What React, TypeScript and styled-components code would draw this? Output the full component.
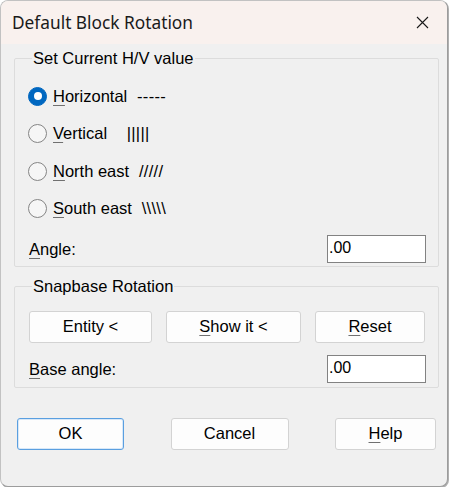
import React from "react";
import styled, { createGlobalStyle } from "styled-components";

const GlobalStyle = createGlobalStyle`
  html, body {
    margin: 0;
    padding: 0;
    background: #ffffff;
  }
  body {
    font-family: "Liberation Sans", Arial, sans-serif;
    color: #000;
  }
`;

const Window = styled.div`
  width: 448px;
  height: 487px;
  box-sizing: border-box;
  border: 1px solid #c2c2c2;
  border-right-color: #9c9c9c;
  border-bottom-color: #9c9c9c;
  box-shadow: 1px 1px 0 #b0b0b0;
  border-radius: 8px;
  overflow: hidden;
  background: #f0f0f0;
  display: flex;
  flex-direction: column;
`;

const TitleBar = styled.div`
  height: 43px;
  flex: none;
  background: #f9f1ee;
  display: flex;
  align-items: center;
  justify-content: space-between;
  padding-left: 11px;
`;

const Title = styled.div`
  font-family: "Noto Sans", "Open Sans", sans-serif;
  font-size: 17.3px;
  color: #1a1a1a;
  padding-bottom: 1px;
`;

const CloseBox = styled.div`
  width: 49px;
  height: 43px;
  display: flex;
  align-items: center;
  justify-content: center;
`;

const Body = styled.div`
  padding: 4.5px 8px 0 13px;
  display: flex;
  flex-direction: column;
`;

const Group = styled.fieldset<{ $gap?: number; $pt: number; $pb: number }>`
  margin: ${({ $gap }) => $gap ?? 0}px 0 0 0;
  padding: ${({ $pt }) => $pt}px 12px ${({ $pb }) => $pb}px 13px;
  border: 1px solid #dcdcdc;
  border-radius: 2px;
  min-width: 0;
`;

const Legend = styled.legend`
  font-size: 16.5px;
  padding: 0 1px;
  margin-left: 4px;
  line-height: 19px;
`;

const RadioRow = styled.label`
  height: 37.5px;
  display: flex;
  align-items: center;
  font-size: 16.5px;
  white-space: pre;
`;

const RadioDot = styled.span<{ $checked?: boolean }>`
  width: 19px;
  height: 19px;
  box-sizing: border-box;
  border-radius: 50%;
  flex: none;
  margin-right: 6px;
  display: flex;
  align-items: center;
  justify-content: center;
  background: ${({ $checked }) => ($checked ? "#0067c0" : "#f6f6f6")};
  border: 1px solid ${({ $checked }) => ($checked ? "#0067c0" : "#858585")};
  &::after {
    content: "";
    display: ${({ $checked }) => ($checked ? "block" : "none")};
    width: 8px;
    height: 8px;
    border-radius: 50%;
    background: #ffffff;
  }
`;

const Glyphs = styled.span`
  letter-spacing: 0.3px;
`;

const FieldRow = styled.div<{ $gap: number }>`
  margin-top: ${({ $gap }) => $gap}px;
  height: 28px;
  display: flex;
  align-items: center;
  justify-content: space-between;
  padding-left: 1px;
`;

const FieldLabel = styled.span`
  font-size: 16.5px;
  padding-top: 1px;
`;

const NumberInput = styled.input`
  width: 99px;
  height: 28px;
  box-sizing: border-box;
  border: 1px solid #828282;
  background: #ffffff;
  font-family: "Liberation Sans", Arial, sans-serif;
  font-size: 16px;
  padding: 0 0 2px 1px;
  margin: 0;
  outline: none;
  color: #000;
`;

const ButtonRow = styled.div`
  display: flex;
  gap: 14px;
  padding-left: 1px;
`;

const Button = styled.button<{ $w: number; $default?: boolean }>`
  width: ${({ $w }) => $w}px;
  height: 32px;
  box-sizing: border-box;
  margin: 0;
  padding: 0 0 1px 0;
  background: #fdfdfd;
  border: 1px solid ${({ $default }) => ($default ? "#5a9fe0" : "#d3d3d3")};
  box-shadow: ${({ $default }) => ($default ? "inset 0 0 0 1px #d8e8f8" : "none")};
  border-radius: 3px;
  font-family: "Liberation Sans", Arial, sans-serif;
  font-size: 16.5px;
  color: #000;
`;

const Footer = styled.div`
  margin-top: 30px;
  padding: 0 3px;
  display: flex;
  justify-content: space-between;
`;

const Mn = styled.u`
  text-decoration-color: #707070;
  text-decoration-thickness: 1px;
  text-underline-offset: 3px;
`;

const radios = [
  { key: "H", rest: "orizontal", glyph: "  -----", checked: true },
  { key: "V", rest: "ertical", glyph: "    |||||" },
  { key: "N", rest: "orth east", glyph: "  /////" },
  { key: "S", rest: "outh east", glyph: "  \\\\\\\\\\" },
];

const App = () => {
  return (
    <>
      <GlobalStyle />
      <Window>
        <TitleBar>
          <Title>Default Block Rotation</Title>
          <CloseBox>
            <svg width="13" height="13" viewBox="0 0 13 13">
              <path d="M1 1 L12 12 M12 1 L1 12" stroke="#1a1a1a" strokeWidth="1.1" fill="none" />
            </svg>
          </CloseBox>
        </TitleBar>
        <Body>
          <Group $pt={10} $pb={3}>
            <Legend>Set Current H/V value</Legend>
            {radios.map((r) => (
              <RadioRow key={r.key}>
                <RadioDot $checked={r.checked} />
                <span>
                  <Mn>{r.key}</Mn>
                  {r.rest}
                </span>
                <Glyphs>{r.glyph}</Glyphs>
              </RadioRow>
            ))}
            <FieldRow $gap={7.5}>
              <FieldLabel>
                <Mn>A</Mn>ngle:
              </FieldLabel>
              <NumberInput defaultValue=".00" />
            </FieldRow>
          </Group>
          <Group $gap={9.5} $pt={15} $pb={4}>
            <Legend>Snapbase Rotation</Legend>
            <ButtonRow>
              <Button $w={123}>Entity &lt;</Button>
              <Button $w={135}>
                <Mn>S</Mn>how it &lt;
              </Button>
              <Button $w={110}>
                <Mn>R</Mn>eset
              </Button>
            </ButtonRow>
            <FieldRow $gap={12.5}>
              <FieldLabel>
                <Mn>B</Mn>ase angle:
              </FieldLabel>
              <NumberInput defaultValue=".00" />
            </FieldRow>
          </Group>
          <Footer>
            <Button $w={107} $default>
              OK
            </Button>
            <Button $w={118}>Cancel</Button>
            <Button $w={101}>
              <Mn>H</Mn>elp
            </Button>
          </Footer>
        </Body>
      </Window>
    </>
  );
};

export default App;
